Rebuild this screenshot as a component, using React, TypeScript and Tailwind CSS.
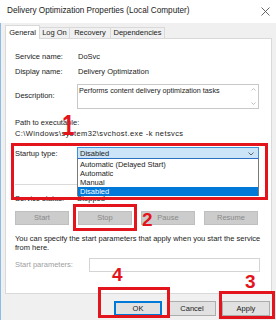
import React from "react";

const font = { fontFamily: '"Liberation Sans", Arial, sans-serif' };

function Btn({ label, w = "w-[54px]", cls = "" }: { label: string; w?: string; cls?: string }) {
  return (
    <div className={`${w} h-[14px] flex items-center justify-center text-[7.5px] ${cls}`}>{label}</div>
  );
}

export default function App() {
  return (
    <div className="relative w-[276px] h-[320px] bg-[#f0f0f0] overflow-hidden text-[#1a1a1a]" style={font}>
      {/* title bar */}
      <div className="h-[23px] bg-white flex items-center justify-between pl-[7px] pr-[5px]">
        <span className="text-[8.2px] text-[#222]">Delivery Optimization Properties (Local Computer)</span>
        <svg width="9" height="9" viewBox="0 0 9 9" className="mr-[1px]">
          <path d="M0.5 0.5 L8.5 8.5 M8.5 0.5 L0.5 8.5" stroke="#555" strokeWidth="0.9" />
        </svg>
      </div>
      <div className="border-l-[1px] border-[#8cbbe8] h-[297px] flex flex-col">
        {/* tabs */}
        <div className="flex items-end pl-[4px] h-[15px] text-[7.5px]">
          <div className="w-[35px] h-[14px] bg-white border border-b-0 border-[#d9d9d9] flex items-center justify-center relative z-10 -mb-[1px]">General</div>
          <div className="w-[30px] h-[11px] border border-b-0 border-l-0 border-[#d9d9d9] flex items-center justify-center">Log On</div>
          <div className="w-[41px] h-[11px] border border-b-0 border-l-0 border-[#d9d9d9] flex items-center justify-center">Recovery</div>
          <div className="w-[54px] h-[11px] border border-b-0 border-l-0 border-[#d9d9d9] flex items-center justify-center">Dependencies</div>
        </div>
        {/* panel */}
        <div className="ml-[4px] w-[267px] h-[256px] bg-white border border-[#d9d9d9] flex flex-col pl-[9px] text-[7.5px] text-[#222]">
          <div className="mt-[13px] h-[10px] flex items-center">
            <span className="w-[63px]">Service name:</span>
            <span>DoSvc</span>
          </div>
          <div className="mt-[5px] h-[10px] flex items-center">
            <span className="w-[63px]">Display name:</span>
            <span>Delivery Optimization</span>
          </div>
          <div className="mt-[7px] h-[25px] flex">
            <span className="w-[62px] pt-[6px]">Description:</span>
            <div className="w-[182px] h-[25px] border border-[#c8c8c8] flex">
              <div className="flex-1 pl-[1px] pt-[1px] leading-[9px] text-[7.2px]">Performs content delivery optimization tasks</div>
              <div className="w-[9px] flex flex-col items-center justify-between py-[3px]">
                <svg width="5" height="3" viewBox="0 0 5 3"><path d="M0.5 2.5 L2.5 0.5 L4.5 2.5" stroke="#b0b0b0" strokeWidth="0.8" fill="none" /></svg>
                <svg width="5" height="3" viewBox="0 0 5 3"><path d="M0.5 0.5 L2.5 2.5 L4.5 0.5" stroke="#b0b0b0" strokeWidth="0.8" fill="none" /></svg>
              </div>
            </div>
          </div>
          <div className="mt-[9px] h-[10px] flex items-center">Path to executable:</div>
          <div className="mt-[1px] h-[10px] flex items-center tracking-[0.4px]">C:\Windows\system32\svchost.exe -k netsvcs</div>
          <div className="mt-[8px] h-[13px] flex items-center">
            <span className="w-[62px]">Startup type:</span>
            <div className="w-[182px] h-[13px] bg-[#cce4f7] border border-[#3c8fd8] flex items-center justify-between pl-[2px] pr-[4px]">
              <span>Disabled</span>
              <svg width="6" height="4" viewBox="0 0 6 4"><path d="M0.5 0.5 L3 3 L5.5 0.5" stroke="#444" strokeWidth="0.8" fill="none" /></svg>
            </div>
          </div>
          <div className="mt-[24px] h-[1px] w-[244px] bg-[#dadada]" />
          <div className="mt-[9px] h-[10px] flex items-center">
            <span className="w-[62px]">Service status:</span>
            <span>Stopped</span>
          </div>
          <div className="mt-[7px] flex gap-[9px] text-[#8a8a8a]">
            <Btn label="Start" cls="bg-[#cccccc] border border-[#bfbfbf]" />
            <Btn label="Stop" cls="bg-[#cccccc] border border-[#bfbfbf]" />
            <Btn label="Pause" cls="bg-[#cccccc] border border-[#bfbfbf]" />
            <Btn label="Resume" cls="bg-[#cccccc] border border-[#bfbfbf]" />
          </div>
          <div className="mt-[9px] leading-[9px] w-[250px]">
            You can specify the start parameters that apply when you start the service from here.
          </div>
          <div className="mt-[6px] h-[14px] flex items-center">
            <span className="w-[74px] text-[#a0a0a0]">Start parameters:</span>
            <div className="w-[171px] h-[14px] border border-[#d4d4d4] bg-white" />
          </div>
        </div>
        {/* bottom buttons */}
        <div className="mt-[7px] flex justify-end gap-[6px] pr-[6px]">
          <Btn label="OK" w="w-[48px]" cls="h-[15px] bg-[#e1e1e1] border-[2px] border-[#0078d7]" />
          <Btn label="Cancel" w="w-[48px]" cls="h-[15px] bg-[#e1e1e1] border border-[#adadad]" />
          <Btn label="Apply" w="w-[48px]" cls="h-[15px] bg-[#e1e1e1] border border-[#adadad]" />
        </div>
      </div>

      {/* dropdown list overlay */}
      <div className="absolute left-[77px] top-[158px] w-[182px] h-[38px] bg-white border border-[#7a7a7a] border-t-[#2a6fc0] flex flex-col text-[7.5px] text-[#222] pt-[1px]">
        <div className="h-[9px] leading-[9px] pl-[2px]">Automatic (Delayed Start)</div>
        <div className="h-[9px] leading-[9px] pl-[2px]">Automatic</div>
        <div className="h-[9px] leading-[9px] pl-[2px]">Manual</div>
        <div className="h-[9px] leading-[9px] pl-[2px] bg-[#0078d7] text-white">Disabled</div>
      </div>

      {/* annotations */}
      <div className="absolute left-[11px] top-[143px] w-[257px] h-[57px] border-[3px] border-[#e3141b]" />
      <div className="absolute left-[73px] top-[204px] w-[64px] h-[27px] border-[3px] border-[#e3141b]" />
      <div className="absolute left-[98px] top-[287px] w-[72px] h-[31px] border-[3px] border-[#e3141b]" />
      <div className="absolute left-[219px] top-[291px] w-[56px] h-[28px] border-[3px] border-[#e3141b]" />
      <div className="absolute left-[60px] top-[110px] text-[30px] leading-none font-bold text-[#e3141b] scale-x-75">1</div>
      <div className="absolute left-[142px] top-[210px] text-[19px] leading-none font-bold text-[#e3141b]">2</div>
      <div className="absolute left-[245px] top-[272px] text-[19px] leading-none font-bold text-[#e3141b]">3</div>
      <div className="absolute left-[112px] top-[265px] text-[19px] leading-none font-bold text-[#e3141b]">4</div>
    </div>
  );
}
